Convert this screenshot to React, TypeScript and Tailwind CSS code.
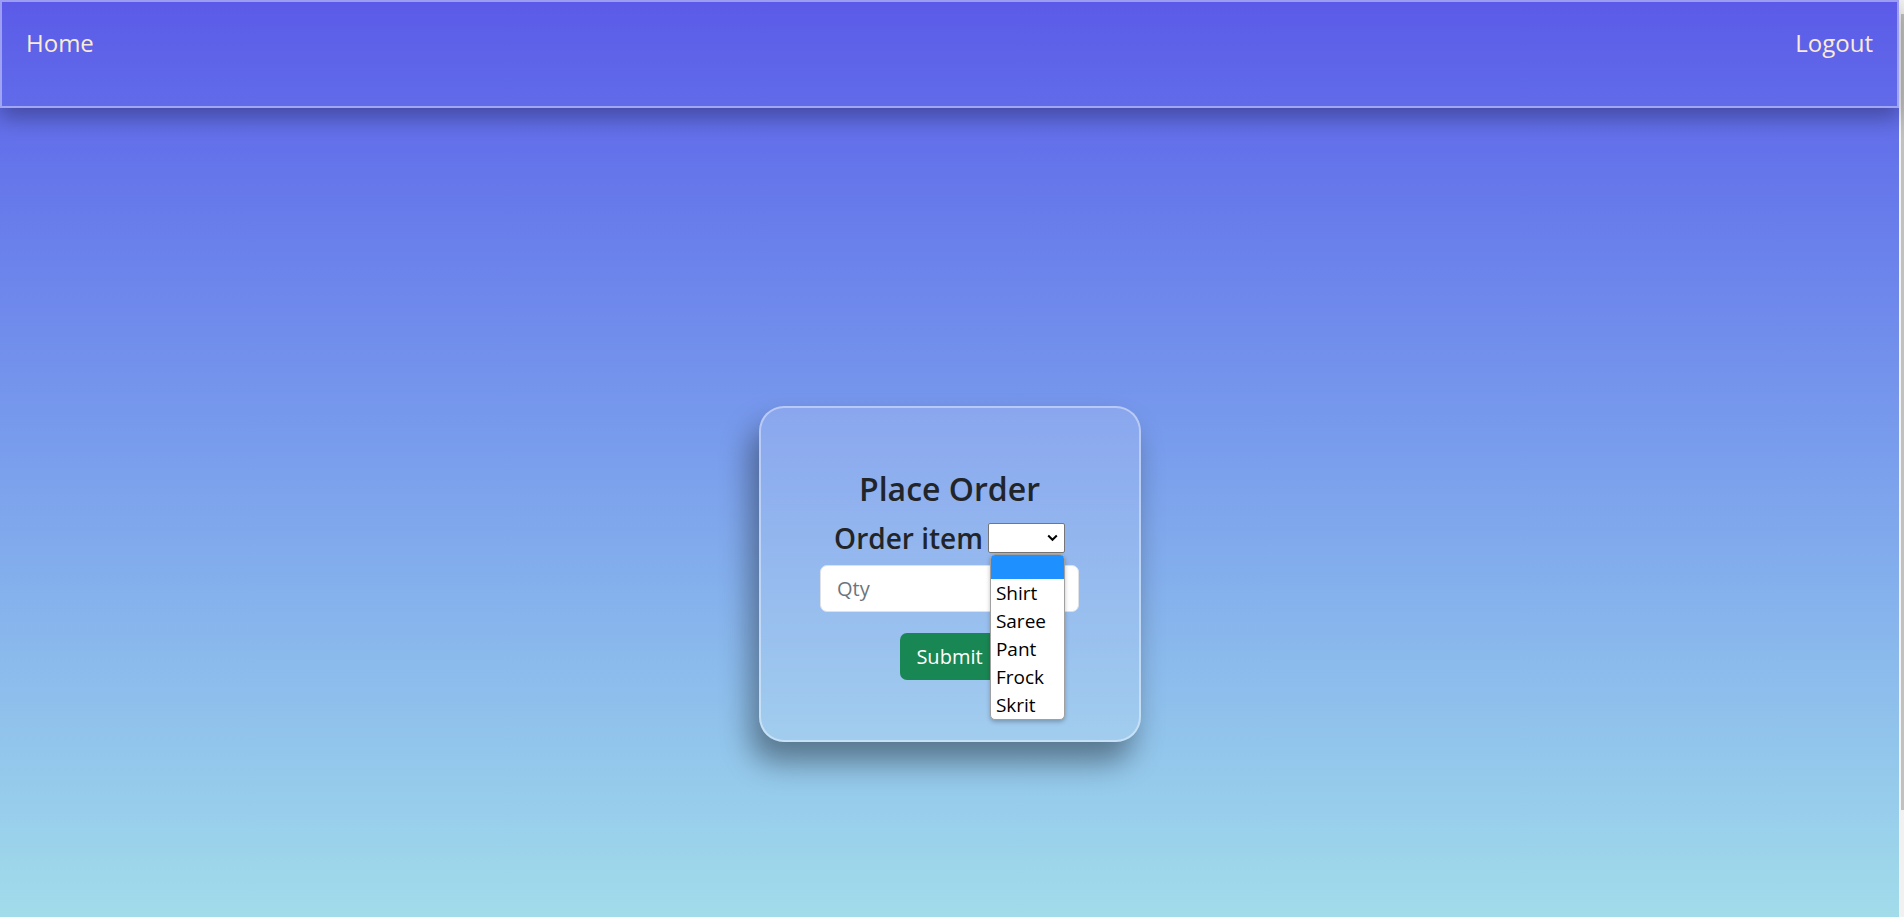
import React from 'react';

const options = ['Shirt', 'Saree', 'Pant', 'Frock', 'Skrit'];

const App: React.FC = () => {
  return (
    <div className="flex h-[917px] overflow-hidden font-['Open_Sans',sans-serif]">
      <div className="flex-1 flex flex-col bg-gradient-to-b from-[#5b5ae8] to-[#a2dcea]">
        {/* Navbar */}
        <nav className="relative z-10 h-[108px] border-2 border-white/40 shadow-[0_10px_20px_rgba(0,0,0,0.3)] flex justify-between items-start px-6 pt-[23px] text-[24px] leading-[36px] text-[#faebd7]">
          <a href="#">Home</a>
          <a href="#">Logout</a>
        </nav>

        {/* Order card */}
        <main className="flex-1 flex justify-center pt-[298px]">
          <div className="w-[382px] h-[336px] rounded-[25px] border-2 border-white/40 bg-white/15 shadow-[-8px_20px_30px_rgba(0,0,0,0.4)] flex flex-col items-center pt-[61px] text-[#212529]">
            <h2 className="text-[32px] leading-[40px] font-semibold">Place Order</h2>

            <div className="mt-[12px] flex items-center gap-[5px]">
              <label className="text-[28px] leading-[34px] font-semibold">Order item</label>
              <div className="relative">
                <div className="w-[77px] h-[30px] bg-white border border-[#767676] rounded-[2px] flex items-center justify-end pr-[6px]">
                  <svg width="11" height="8" viewBox="0 0 11 8" fill="none">
                    <path d="M1.2 1.5 L5.5 5.8 L9.8 1.5" stroke="#000" strokeWidth="2" />
                  </svg>
                </div>
                {/* open dropdown */}
                <div className="absolute left-[2px] top-[31px] z-20 w-[75px] bg-white border border-[#a0a0a0] rounded-[5px] overflow-hidden shadow-[0_2px_4px_rgba(0,0,0,0.25)] text-[19px] leading-[28px] text-black">
                  <div className="h-[24px] bg-[#1e90ff]" />
                  {options.map((o) => (
                    <div key={o} className="h-[28px] pl-[5px]">
                      {o}
                    </div>
                  ))}
                </div>
              </div>
            </div>

            <input
              type="text"
              placeholder="Qty"
              className="mt-[10px] w-[259px] h-[47px] bg-white border border-[#dee2e6] rounded-[7px] px-4 text-[20px] placeholder:text-[#6c757d] outline-none"
            />

            <button className="mt-[21px] h-[47px] px-4 rounded-[7px] bg-[#198754] text-white text-[20px]">
              Submit
            </button>
          </div>
        </main>
      </div>

      {/* scrollbar strip */}
      <div className="w-[5px] bg-[#f1f1f1] pt-[14px]">
        <div className="ml-[2px] h-[796px] bg-[#c1c1c1]" />
      </div>
    </div>
  );
};

export default App;
